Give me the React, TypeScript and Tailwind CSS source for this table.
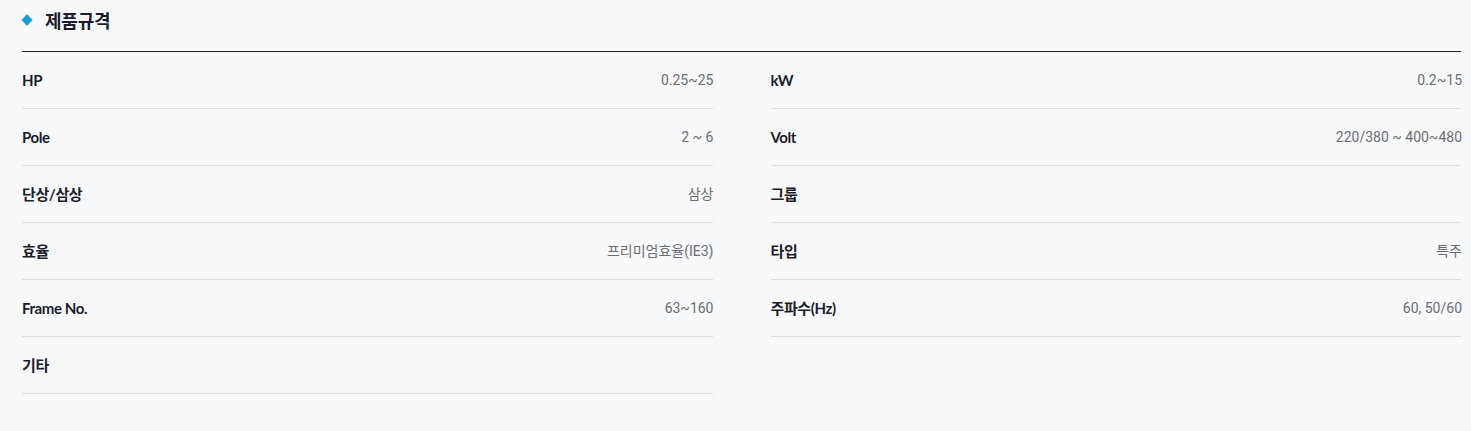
const left: [string, string][] = [
  ["HP", "0.25~25"],
  ["Pole", "2 ~ 6"],
  ["단상/삼상", "삼상"],
  ["효율", "프리미엄효율(IE3)"],
  ["Frame No.", "63~160"],
  ["기타", ""],
];

const right: [string, string][] = [
  ["kW", "0.2~15"],
  ["Volt", "220/380 ~ 400~480"],
  ["그룹", ""],
  ["타입", "특주"],
  ["주파수(Hz)", "60, 50/60"],
];

const Row = ({ label, value }: { label: string; value: string }) => (
  <div className="flex h-[57px] items-center justify-between border-b border-[#dcdde0]">
    <span className="text-[15px] font-bold tracking-[-0.4px] text-[#1c1d2b] [font-family:Lato,'Noto_Sans_CJK_KR',sans-serif]">
      {label}
    </span>
    <span className="-mr-[1px] text-[14px] text-[#6b6e75] [font-family:Roboto,'Noto_Sans_CJK_KR',sans-serif]">
      {value}
    </span>
  </div>
);

export default function App() {
  return (
    <div className="min-h-[431px] w-full bg-[#f7f8fa] pl-[22px] pr-[10px] pt-[8px]">
      <div className="flex h-[24px] items-center gap-[14px] pl-[1px]">
        <span className="block h-[8px] w-[8px] rotate-45 bg-[#1a9fd9]" />
        <h2 className="text-[18px] font-bold tracking-[-0.2px] text-[#1c1d2b] [font-family:'Noto_Sans_CJK_KR',sans-serif]">
          제품규격
        </h2>
      </div>
      <div className="mt-[19px] border-t border-[#222]" />
      <div className="grid grid-cols-2 gap-x-[58px]">
        <div className="flex flex-col">
          {left.map(([l, v]) => (
            <Row key={l} label={l} value={v} />
          ))}
        </div>
        <div className="flex flex-col">
          {right.map(([l, v]) => (
            <Row key={l} label={l} value={v} />
          ))}
        </div>
      </div>
    </div>
  );
}
